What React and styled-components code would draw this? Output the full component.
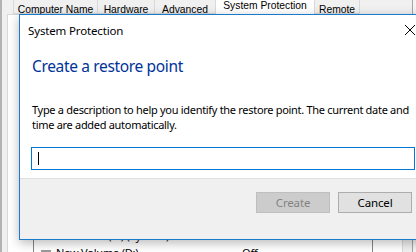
import React from "react";
import styled, { createGlobalStyle } from "styled-components";

const GlobalStyle = createGlobalStyle`
    html, body {
        margin: 0;
        padding: 0;
        overflow: hidden;
        background: #f0f0f0;
    }
`;

const UI_FONT = `"Noto Sans", "Open Sans", sans-serif`;

const Desktop = styled.div`
    position: relative;
    width: 416px;
    height: 252px;
    overflow: hidden;
    display: flex;
    background: #f4f4f4;
    font-family: ${UI_FONT};
`;

/* ---- the System Properties window behind ---- */

const PropsWindow = styled.div`
    flex: none;
    width: 410px;
    height: 100%;
    display: flex;
    flex-direction: column;
    background: #f0f0f0;
    border-left: 2px solid #b3b3b3;
    border-right: 1px solid #a5a5a5;
`;

const TabStrip = styled.div`
    flex: none;
    height: 14px;
    display: flex;
    align-items: flex-end;
    padding-left: 11px;
    font-family: "Liberation Sans", Arial, sans-serif;
    font-size: 10.3px;
`;

const Tab = styled.div`
    box-sizing: border-box;
    width: ${(p) => p.$w}px;
    height: ${(p) => (p.$active ? 16 : 14)}px;
    margin-bottom: ${(p) => (p.$active ? -1 : 0)}px;
    display: flex;
    align-items: flex-start;
    justify-content: center;
    padding-top: ${(p) => (p.$active ? 1 : 4)}px;
    line-height: 11px;
    background: ${(p) => (p.$active ? "#ffffff" : "#f0f0f0")};
    border: 1px solid #d9d9d9;
    border-top: none;
    border-right: none;
    border-bottom: ${(p) => (p.$active ? "none" : "1px solid #d9d9d9")};
    color: #000;
    white-space: nowrap;
    &:last-child {
        border-right: 1px solid #d9d9d9;
    }
`;

const Page = styled.div`
    flex: 1;
    margin: 0 9px 0 5px;
    padding-top: 193px;
    background: #ffffff;
    border: 1px solid #d9d9d9;
    border-bottom: none;
`;

const DriveList = styled.div`
    margin: 0 29px 0 25px;
    background: #ffffff;
    border: 1px solid #828790;
    font-size: 11px;
    letter-spacing: -0.2px;
`;

const ListRow = styled.div`
    display: grid;
    grid-template-columns: 208px 1fr;
    height: 17px;
    align-items: center;
    color: #000;
    border-bottom: ${(p) => (p.$header ? "1px solid #e5e5e5" : "none")};
`;

const DriveCell = styled.div`
    display: flex;
    align-items: center;
    gap: 5px;
    padding-left: 7px;
    white-space: nowrap;
`;

const DriveIcon = ({ system }) => (
    <svg width="10" height="10" viewBox="0 0 10 10">
        <rect x="0" y="2" width="10" height="7" fill={system ? "#2f5f9e" : "#9a9a9a"} />
        <rect x="1" y="6" width="8" height="1" fill={system ? "#8fb6e8" : "#d0d0d0"} />
    </svg>
);

/* ---- the System Protection dialog on top ---- */

const Dialog = styled.div`
    position: absolute;
    left: 19px;
    top: 14px;
    width: 413px;
    height: 224px;
    display: flex;
    flex-direction: column;
    background: #ffffff;
    border: 1px solid #1a7acb;
    box-shadow: 0 3px 10px rgba(0, 0, 0, 0.28);
    font-family: ${UI_FONT};
    color: #000;
`;

const TitleBar = styled.div`
    flex: none;
    height: 30px;
    display: flex;
    align-items: center;
    justify-content: space-between;
    padding-left: 8px;
    font-size: 11.5px;
    letter-spacing: -0.15px;
`;

const CloseButton = styled.div`
    width: 46px;
    height: 30px;
    display: flex;
    align-items: center;
    justify-content: center;
    margin-top: -1px;
`;

const Body = styled.div`
    flex: 1;
    display: flex;
    flex-direction: column;
    padding: 0 11px;
`;

const Heading = styled.div`
    margin-top: 11px;
    margin-left: 1px;
    font-size: 15.5px;
    letter-spacing: -0.35px;
    line-height: 21px;
    color: #003399;
`;

const Description = styled.div`
    margin-top: 25px;
    margin-left: 1px;
    width: 384px;
    font-size: 11px;
    letter-spacing: -0.3px;
    line-height: 15px;
`;

const Field = styled.div`
    box-sizing: border-box;
    margin-top: 15px;
    width: 384px;
    height: 23px;
    display: flex;
    align-items: center;
    padding-left: 6px;
    border: 1px solid #0078d7;
    background: #fff;
`;

const Caret = styled.span`
    width: 1px;
    height: 13px;
    background: #000;
`;

const Footer = styled.div`
    flex: none;
    height: 47px;
    display: flex;
    justify-content: flex-end;
    align-items: flex-start;
    gap: 8px;
    padding: 13px 21px 0 0;
    background: #f0f0f0;
    border-top: 1px solid #dfdfdf;
`;

const Button = styled.div`
    box-sizing: border-box;
    width: 74px;
    height: 21px;
    display: flex;
    align-items: center;
    justify-content: center;
    font-size: 11.5px;
    letter-spacing: -0.15px;
    background: ${(p) => (p.$disabled ? "#cccccc" : "#e1e1e1")};
    border: 1px solid ${(p) => (p.$disabled ? "#bfbfbf" : "#adadad")};
    color: ${(p) => (p.$disabled ? "#838383" : "#000")};
`;

const tabs = [
    { label: "Computer Name", w: 84 },
    { label: "Hardware", w: 57 },
    { label: "Advanced", w: 61 },
    { label: "System Protection", w: 99, active: true },
    { label: "Remote", w: 46 },
];

const App = () => (
    <>
        <GlobalStyle />
        <Desktop>
            <PropsWindow>
                <TabStrip>
                    {tabs.map((t) => (
                        <Tab key={t.label} $w={t.w} $active={t.active}>
                            {t.label}
                        </Tab>
                    ))}
                </TabStrip>
                <Page>
                    <DriveList>
                        <ListRow $header>
                            <DriveCell>Available Drives</DriveCell>
                            <div>Protection</div>
                        </ListRow>
                        <ListRow>
                            <DriveCell>
                                <DriveIcon system />
                                Local Disk (C:) (System)
                            </DriveCell>
                            <div>On</div>
                        </ListRow>
                        <ListRow>
                            <DriveCell>
                                <DriveIcon />
                                New Volume (D:)
                            </DriveCell>
                            <div>Off</div>
                        </ListRow>
                    </DriveList>
                </Page>
            </PropsWindow>

            <Dialog>
                <TitleBar>
                    System Protection
                    <CloseButton>
                        <svg width="10" height="10" viewBox="0 0 10 10">
                            <path d="M0 0 L10 10 M10 0 L0 10" stroke="#000" strokeWidth="1" fill="none" />
                        </svg>
                    </CloseButton>
                </TitleBar>
                <Body>
                    <Heading>Create a restore point</Heading>
                    <Description>
                        Type a description to help you identify the restore point. The current date and time are added automatically.
                    </Description>
                    <Field>
                        <Caret />
                    </Field>
                </Body>
                <Footer>
                    <Button $disabled>Create</Button>
                    <Button>Cancel</Button>
                </Footer>
            </Dialog>
        </Desktop>
    </>
);

export default App;
